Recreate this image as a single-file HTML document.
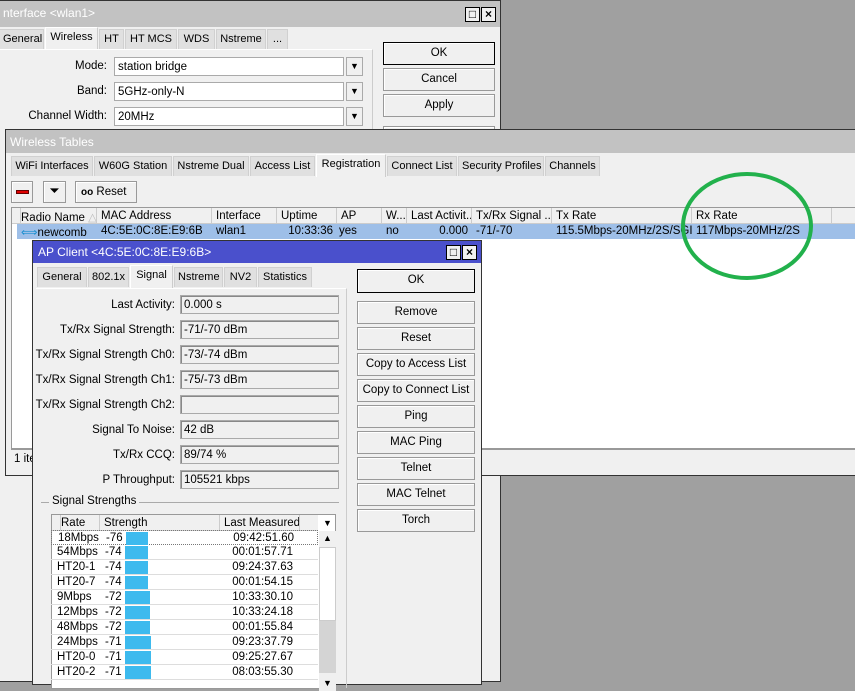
<!DOCTYPE html>
<html><head><meta charset="utf-8"><style>
*{box-sizing:border-box;margin:0;padding:0}
body{width:855px;height:680px;overflow:hidden;background:#a0a0a0;font-family:"Liberation Sans",sans-serif;font-size:11.5px;color:#000;position:relative}
.a{position:absolute}
.win{background:#f0f0f0;border:1px solid #333}
.tb{background:#c2c2c2;color:#fff;font-size:12px;padding:5px 4px}
.tab{position:absolute;height:20px;background:#e0e0e0;border:1px solid #d0d0d0;border-bottom:none;padding:3px 3px;white-space:nowrap;font-size:11px;text-align:center}
.tab.s{background:#f0f0f0;height:23px;top:-2px;border-color:#fff #ccc #ccc #fff}
.btn{position:absolute;background:#f0f0f0;border:1px solid #999;box-shadow:inset 1px 1px #fff;text-align:center;padding-top:4px}
.fld{position:absolute;background:#fff;border:1px solid #aaa;padding:3px 3px;height:19px}
.ro{position:absolute;background:#f0f0f0;border:1px solid #aaa;padding:3px 3px;height:19px;box-shadow:inset 1px 1px #888}
.lab{position:absolute;text-align:right;width:150px}
.dd{position:absolute;width:17px;height:19px;border:1px solid #aaa;background:#f0f0f0;text-align:center;font-size:9px;line-height:17px}
.th{position:absolute;border-right:1px solid #ccc;padding:2px 4px;height:16px;white-space:nowrap;overflow:hidden}
.td{position:absolute;padding:1px 4px;white-space:nowrap;overflow:hidden}
.xb{position:absolute;width:15px;height:15px;border:1px solid #000;background:#f0f0f0;font-size:12px;line-height:13px;text-align:center;font-weight:bold}
</style></head><body>

<!-- Interface window -->
<div class="a win" style="left:-2px;top:0;width:503px;height:682px;">
 <div class="tb" style="height:26px">nterface &lt;wlan1&gt;</div>
 <div class="xb" style="left:466px;top:6px">□</div><div class="xb" style="left:482px;top:6px">×</div>
 <div class="a" style="left:0;top:28px;width:375px;height:20px">
  <div class="tab" style="left:0;width:45px">General</div>
  <div class="tab s" style="left:46px;width:53px">Wireless</div>
  <div class="tab" style="left:100px;width:25px">HT</div>
  <div class="tab" style="left:126px;width:52px">HT MCS</div>
  <div class="tab" style="left:179px;width:37px">WDS</div>
  <div class="tab" style="left:217px;width:50px">Nstreme</div>
  <div class="tab" style="left:268px;width:21px">...</div>
 </div>
 <div class="a" style="left:0;top:48px;width:374px;height:90px;border-right:1px solid #ccc;border-top:1px solid #fff"></div>
 <div class="lab" style="left:-42px;top:59px">Mode:</div><div class="fld" style="left:115px;top:56px;width:230px">station bridge</div><div class="dd" style="left:347px;top:56px">▼</div>
 <div class="lab" style="left:-42px;top:84px">Band:</div><div class="fld" style="left:115px;top:81px;width:230px">5GHz-only-N</div><div class="dd" style="left:347px;top:81px">▼</div>
 <div class="lab" style="left:-42px;top:109px">Channel Width:</div><div class="fld" style="left:115px;top:106px;width:230px">20MHz</div><div class="dd" style="left:347px;top:106px">▼</div>
 <div class="btn" style="left:384px;top:41px;width:112px;height:23px;border-color:#000">OK</div>
 <div class="btn" style="left:384px;top:67px;width:112px;height:23px">Cancel</div>
 <div class="btn" style="left:384px;top:93px;width:112px;height:23px">Apply</div>
 <div class="btn" style="left:384px;top:125px;width:112px;height:23px"></div>
</div>

<!-- Wireless Tables -->
<div class="a win" style="left:5px;top:129px;width:852px;height:347px;">
 <div class="tb" style="height:23px">Wireless Tables</div>
 <div class="a" style="left:5px;top:26px;width:850px;height:21px">
  <div class="tab" style="left:0;width:82px">WiFi Interfaces</div>
  <div class="tab" style="left:83px;width:78px">W60G Station</div>
  <div class="tab" style="left:162px;width:76px">Nstreme Dual</div>
  <div class="tab" style="left:239px;width:65px">Access List</div>
  <div class="tab s" style="left:305px;width:70px">Registration</div>
  <div class="tab" style="left:376px;width:70px">Connect List</div>
  <div class="tab" style="left:447px;width:86px">Security Profiles</div>
  <div class="tab" style="left:534px;width:55px">Channels</div>
 </div>
 <div class="btn" style="left:5px;top:51px;width:22px;height:22px"><div class="a" style="left:4px;top:8px;width:13px;height:4px;background:#e00000;border:1px solid #600"></div></div>
 <div class="btn" style="left:37px;top:51px;width:23px;height:22px;font-size:13px;padding-top:1px">⏷</div>
 <div class="btn" style="left:69px;top:51px;width:62px;height:22px;text-align:left;padding-left:5px"><b style="font-size:10px">oo</b> Reset</div>
 <div class="a" style="left:5px;top:77px;width:850px;height:242px;background:#fff;border:1px solid #999"></div>
 <div class="a" style="left:6px;top:78px;width:849px;height:16px;background:#f0f0f0;border-bottom:1px solid #ccc">
  <div class="th" style="left:0;width:5px"></div>
  <div class="th" style="left:5px;width:80px">Radio Name <span style="color:#bbb">△</span></div>
  <div class="th" style="left:85px;width:115px">MAC Address</div>
  <div class="th" style="left:200px;width:65px">Interface</div>
  <div class="th" style="left:265px;width:60px">Uptime</div>
  <div class="th" style="left:325px;width:45px">AP</div>
  <div class="th" style="left:370px;width:25px">W...</div>
  <div class="th" style="left:395px;width:65px">Last Activit...</div>
  <div class="th" style="left:460px;width:80px">Tx/Rx Signal ...</div>
  <div class="th" style="left:540px;width:140px">Tx Rate</div>
  <div class="th" style="left:680px;width:140px">Rx Rate</div>
 </div>
 <div class="a" style="left:11px;top:94px;width:844px;height:15px;background:#9ebfe8">
  <div class="td" style="left:0"><span style="color:#1a8fd0">⟺</span>newcomb</div>
  <div class="td" style="left:80px">4C:5E:0C:8E:E9:6B</div>
  <div class="td" style="left:195px">wlan1</div>
  <div class="td" style="left:260px;width:60px;text-align:right">10:33:36</div>
  <div class="td" style="left:318px">yes</div>
  <div class="td" style="left:365px">no</div>
  <div class="td" style="left:390px;width:65px;text-align:right">0.000</div>
  <div class="td" style="left:455px">-71/-70</div>
  <div class="td" style="left:535px;width:140px">115.5Mbps-20MHz/2S/SGI</div>
  <div class="td" style="left:675px;background:#9ebfe8">117Mbps-20MHz/2S</div>
 </div>
 <div class="a" style="left:5px;top:319px;width:850px;height:20px;border-top:1px solid #999;padding:3px 3px">1 item</div>
</div>

<!-- green ellipse -->
<svg class="a" style="left:0;top:0" width="855" height="680"><ellipse cx="747" cy="226" rx="64" ry="52" fill="none" stroke="#22b14c" stroke-width="4"/></svg>

<!-- AP Client -->
<div class="a win" style="left:32px;top:240px;width:450px;height:445px;">
 <div class="tb" style="background:#4a50cc;height:22px;padding:4px 5px">AP Client &lt;4C:5E:0C:8E:E9:6B&gt;</div>
 <div class="xb" style="left:413px;top:4px">□</div><div class="xb" style="left:429px;top:4px">×</div>
 <div class="a" style="left:4px;top:26px;width:300px;height:21px">
  <div class="tab" style="left:0;width:50px">General</div>
  <div class="tab" style="left:51px;width:41px">802.1x</div>
  <div class="tab s" style="left:93px;width:43px">Signal</div>
  <div class="tab" style="left:137px;width:49px">Nstreme</div>
  <div class="tab" style="left:187px;width:33px">NV2</div>
  <div class="tab" style="left:221px;width:54px">Statistics</div>
 </div>
 <div class="a" style="left:3px;top:47px;width:311px;height:400px;border-right:1px solid #ccc;border-top:1px solid #fff"></div>
 <div class="lab" style="left:-8px;top:58px">Last Activity:</div><div class="ro" style="left:147px;top:54px;width:159px">0.000 s</div>
 <div class="lab" style="left:-8px;top:83px">Tx/Rx Signal Strength:</div><div class="ro" style="left:147px;top:79px;width:159px">-71/-70 dBm</div>
 <div class="lab" style="left:-8px;top:108px">Tx/Rx Signal Strength Ch0:</div><div class="ro" style="left:147px;top:104px;width:159px">-73/-74 dBm</div>
 <div class="lab" style="left:-8px;top:133px">Tx/Rx Signal Strength Ch1:</div><div class="ro" style="left:147px;top:129px;width:159px">-75/-73 dBm</div>
 <div class="lab" style="left:-8px;top:158px">Tx/Rx Signal Strength Ch2:</div><div class="ro" style="left:147px;top:154px;width:159px"></div>
 <div class="lab" style="left:-8px;top:183px">Signal To Noise:</div><div class="ro" style="left:147px;top:179px;width:159px">42 dB</div>
 <div class="lab" style="left:-8px;top:208px">Tx/Rx CCQ:</div><div class="ro" style="left:147px;top:204px;width:159px">89/74 %</div>
 <div class="lab" style="left:-8px;top:233px">P Throughput:</div><div class="ro" style="left:147px;top:229px;width:159px">105521 kbps</div>
 <div class="a" style="left:8px;top:261px;width:298px;border-top:1px solid #aaa"></div>
 <div class="a" style="left:16px;top:254px;background:#f0f0f0;padding:0 3px">Signal Strengths</div>
 <div class="a" style="left:18px;top:273px;width:285px;height:175px;background:#fff;border:1px solid #999"></div>
 <div class="a" style="left:19px;top:274px;width:266px;height:16px;background:#f0f0f0;border-bottom:1px solid #ccc">
  <div class="th" style="left:0;width:5px"></div><div class="th" style="left:5px;width:43px">Rate</div><div class="th" style="left:48px;width:120px">Strength</div><div class="th" style="left:168px;width:80px">Last Measured</div>
 </div>
 <div class="a" style="left:286px;top:274px;width:17px;height:16px;font-size:9px;text-align:center;line-height:16px">▼</div>
 <div class="a" style="left:286px;top:290px;width:17px;height:160px;background:#f0f0f0">
  <div class="a" style="left:0;top:0;width:17px;height:15px;font-size:9px;text-align:center;line-height:15px">▲</div>
  <div class="a" style="left:0;top:16px;width:17px;height:74px;background:#fff;border:1px solid #ccc"></div>
  <div class="a" style="left:0;top:90px;width:17px;height:52px;background:#d4d4d4"></div>
  <div class="a" style="left:0;top:144px;width:17px;height:16px;font-size:9px;text-align:center;line-height:16px">▼</div>
 </div>
 <div class="btn" style="left:324px;top:28px;width:118px;height:24px;border-color:#000">OK</div>
 <div class="btn" style="left:324px;top:60px;width:118px;height:23px">Remove</div>
 <div class="btn" style="left:324px;top:86px;width:118px;height:23px">Reset</div>
 <div class="btn" style="left:324px;top:112px;width:118px;height:23px">Copy to Access List</div>
 <div class="btn" style="left:324px;top:138px;width:118px;height:23px">Copy to Connect List</div>
 <div class="btn" style="left:324px;top:164px;width:118px;height:23px">Ping</div>
 <div class="btn" style="left:324px;top:190px;width:118px;height:23px">MAC Ping</div>
 <div class="btn" style="left:324px;top:216px;width:118px;height:23px">Telnet</div>
 <div class="btn" style="left:324px;top:242px;width:118px;height:23px">MAC Telnet</div>
 <div class="btn" style="left:324px;top:268px;width:118px;height:23px">Torch</div>
</div>
<div style="position:absolute;left:51px;top:530px;width:267px">
 <div style="height:15px;border:1px dotted #777;position:relative"><span class="td" style="left:2px">18Mbps</span><span class="td" style="left:50px">-76</span><span class="a" style="left:74px;top:1px;width:22px;height:13px;background:#3dbaee"></span><span class="td" style="left:160px;width:86px;text-align:right">09:42:51.60</span></div>
</div>
<div style="position:absolute;left:51px;top:545px;width:267px;font-size:11.5px">
 <div style="height:15px;border-bottom:1px solid #ddd;position:relative"><span class="td" style="left:2px">54Mbps</span><span class="td" style="left:50px">-74</span><span class="a" style="left:74px;top:1px;width:23px;height:13px;background:#3dbaee"></span><span class="td" style="left:160px;width:86px;text-align:right">00:01:57.71</span></div>
 <div style="height:15px;border-bottom:1px solid #ddd;position:relative"><span class="td" style="left:2px">HT20-1</span><span class="td" style="left:50px">-74</span><span class="a" style="left:74px;top:1px;width:23px;height:13px;background:#3dbaee"></span><span class="td" style="left:160px;width:86px;text-align:right">09:24:37.63</span></div>
 <div style="height:15px;border-bottom:1px solid #ddd;position:relative"><span class="td" style="left:2px">HT20-7</span><span class="td" style="left:50px">-74</span><span class="a" style="left:74px;top:1px;width:23px;height:13px;background:#3dbaee"></span><span class="td" style="left:160px;width:86px;text-align:right">00:01:54.15</span></div>
 <div style="height:15px;border-bottom:1px solid #ddd;position:relative"><span class="td" style="left:2px">9Mbps</span><span class="td" style="left:50px">-72</span><span class="a" style="left:74px;top:1px;width:25px;height:13px;background:#3dbaee"></span><span class="td" style="left:160px;width:86px;text-align:right">10:33:30.10</span></div>
 <div style="height:15px;border-bottom:1px solid #ddd;position:relative"><span class="td" style="left:2px">12Mbps</span><span class="td" style="left:50px">-72</span><span class="a" style="left:74px;top:1px;width:25px;height:13px;background:#3dbaee"></span><span class="td" style="left:160px;width:86px;text-align:right">10:33:24.18</span></div>
 <div style="height:15px;border-bottom:1px solid #ddd;position:relative"><span class="td" style="left:2px">48Mbps</span><span class="td" style="left:50px">-72</span><span class="a" style="left:74px;top:1px;width:25px;height:13px;background:#3dbaee"></span><span class="td" style="left:160px;width:86px;text-align:right">00:01:55.84</span></div>
 <div style="height:15px;border-bottom:1px solid #ddd;position:relative"><span class="td" style="left:2px">24Mbps</span><span class="td" style="left:50px">-71</span><span class="a" style="left:74px;top:1px;width:26px;height:13px;background:#3dbaee"></span><span class="td" style="left:160px;width:86px;text-align:right">09:23:37.79</span></div>
 <div style="height:15px;border-bottom:1px solid #ddd;position:relative"><span class="td" style="left:2px">HT20-0</span><span class="td" style="left:50px">-71</span><span class="a" style="left:74px;top:1px;width:26px;height:13px;background:#3dbaee"></span><span class="td" style="left:160px;width:86px;text-align:right">09:25:27.67</span></div>
 <div style="height:15px;border-bottom:1px solid #ddd;position:relative"><span class="td" style="left:2px">HT20-2</span><span class="td" style="left:50px">-71</span><span class="a" style="left:74px;top:1px;width:26px;height:13px;background:#3dbaee"></span><span class="td" style="left:160px;width:86px;text-align:right">08:03:55.30</span></div>
</div>
</body></html>
